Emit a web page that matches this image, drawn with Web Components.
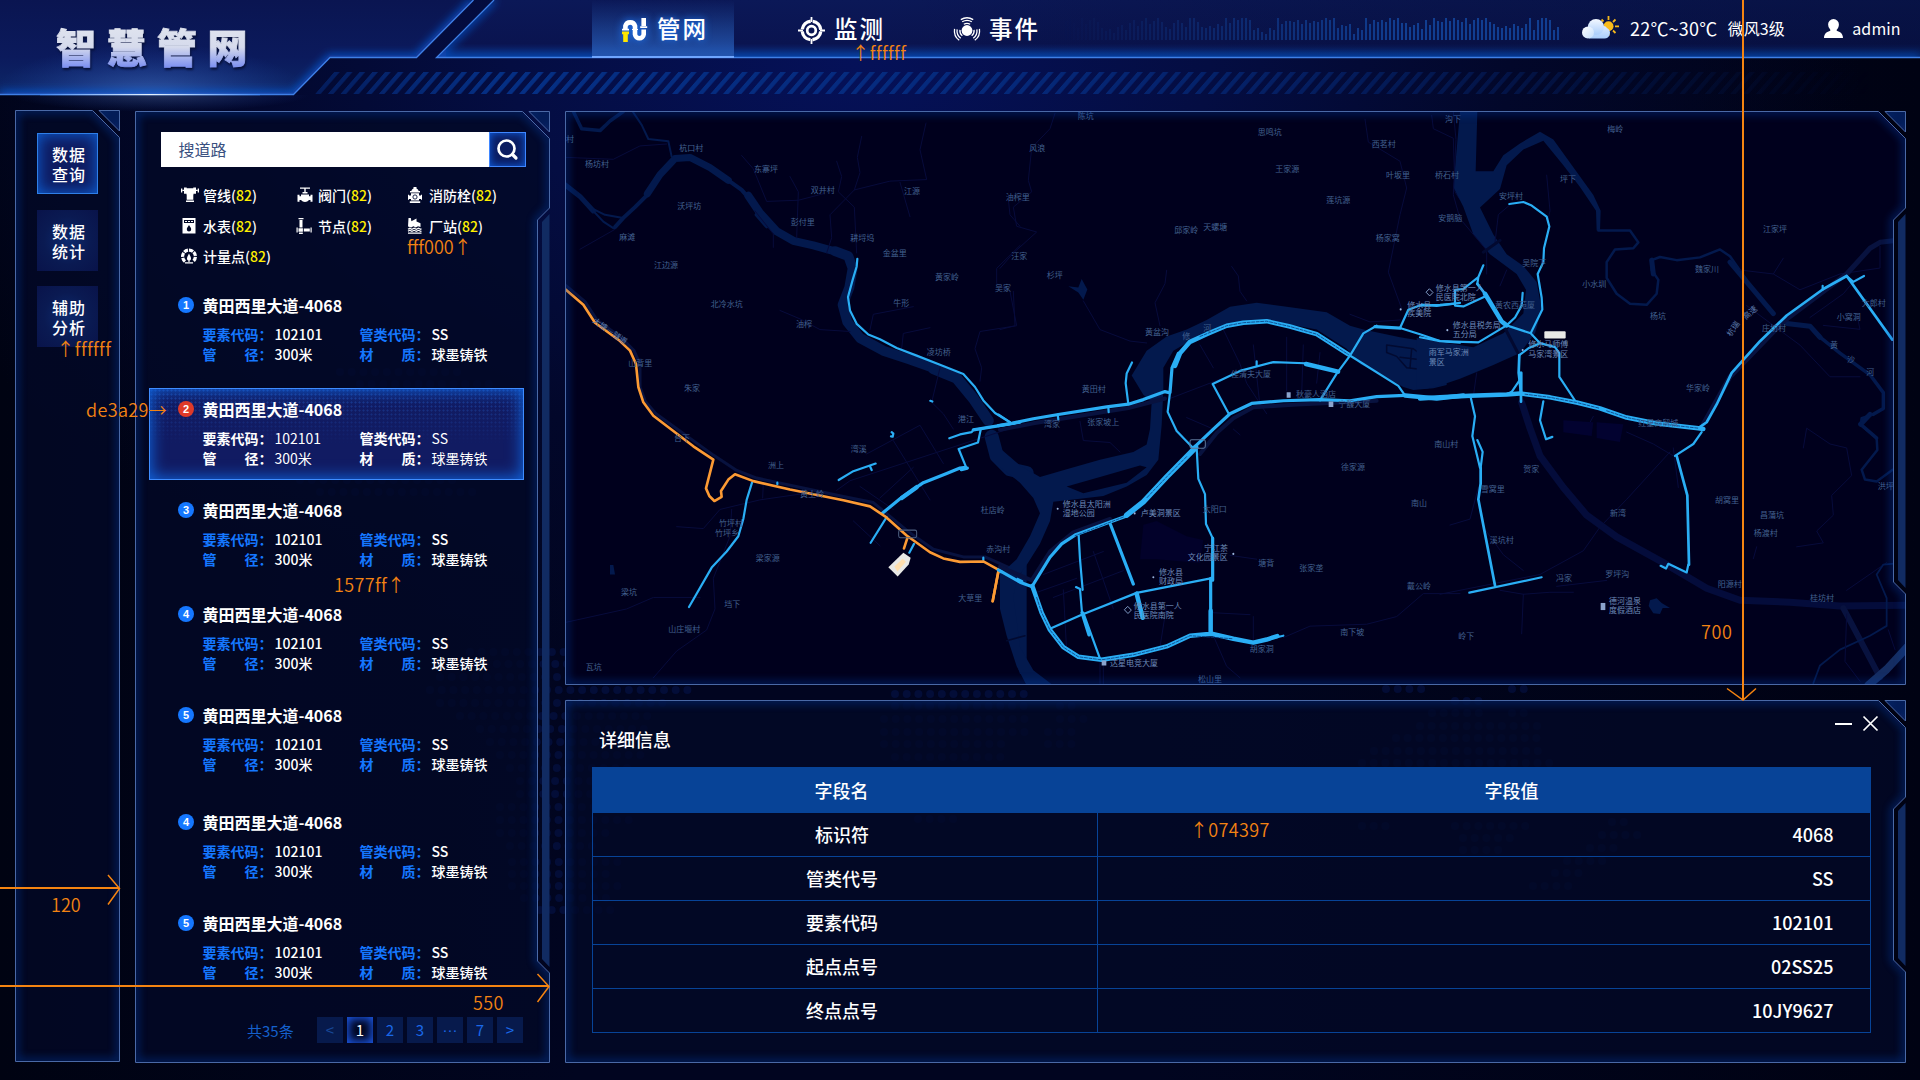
<!DOCTYPE html>
<html lang="zh-CN">
<head>
<meta charset="utf-8">
<title>智慧管网</title>
<style>
html,body{margin:0;padding:0}
body{width:1920px;height:1080px;overflow:hidden;background:#000313;color:#fff;font-family:"Noto Sans CJK SC","Noto Sans",sans-serif}
</style>
</head>
<body>
<pipe-app></pipe-app>
<script>
const css = s => `<style>*{box-sizing:border-box}${s}</style>`;
const define = (name, html, after) => customElements.define(name, class extends HTMLElement {
  connectedCallback() {
    if (this.shadowRoot) return;
    const root = this.attachShadow({ mode: 'open' });
    root.innerHTML = typeof html === 'function' ? html(this) : html;
    if (after) after(this, root);
  }
});

/* ---------- icons ---------- */
const ICONS = {
  net: [25, 24, `<g fill="none" stroke="#fff" stroke-width="4.6"><path d="M3.4 11.5V8a5 5 0 0 1 9.6 0v8.500a4.400 4.400 0 0 0 8.700 0V11.500M21.700 0v8"/></g><path fill="#fff" d="M0 10.800h7v1.800H0zM18.200 8.200h7v1.800h-7zM10 10.900h6v1h-6z"/><path fill="#ffe600" d="M0 13.600h7v2.600H0zM1.200 16.200h4.600V24H1.200z"/>`],
  target: [27, 27, `<g fill="none" stroke="#fff"><circle cx="13.500" cy="13.500" r="9.300" stroke-width="3.300" stroke-dasharray="12.400 2.200" stroke-dashoffset="-1.100"/><circle cx="13.500" cy="13.500" r="4.300" stroke-width="2.700"/><path stroke-width="1.800" d="M13.500 0v5M13.500 22v5M0 13.500h5M22 13.500h5"/></g>`],
  alarm: [26, 25, `<circle cx="13" cy="12.500" r="5.400" fill="#fff"/><g fill="none" stroke="#fff" stroke-width="1.300"><path id="w" d="M9.800 6.200a6.500 6.500 0 0 1 6.400 0M8.200 3.800a9.400 9.400 0 0 1 9.600 0M6.800 1.600a12 12 0 0 1 12.400 0"/><use href="#w" transform="rotate(112 13 12.500)"/><use href="#w" transform="rotate(248 13 12.500)"/></g>`],
  weather: [37, 23, `<defs><linearGradient id="c" x2="0" y2="1"><stop stop-color="#f3f8ff"/><stop offset="1" stop-color="#a9cdfb"/></linearGradient><linearGradient id="d" x2="1" y2="1"><stop stop-color="#fff"/><stop offset="1" stop-color="#c4defc"/></linearGradient></defs><g stroke="#f4b71c" stroke-width="1.800"><path d="M26.500 0v4M33 10.300h4M19.500 3.500l2 2M33.500 3.500l-2.500 2.500M31 14.500l2.500 2.500M26.500 17v3"/></g><circle cx="26.500" cy="10.300" r="5" fill="#f9bb1a"/><path fill="url(#c)" d="M7 22.500h15a5.600 5.600 0 0 0 3-10.500a4 4 0 0 0-3.500-2A8.200 8.200 0 0 0 6 10z"/><circle cx="14" cy="11" r="8" fill="url(#c)"/><circle cx="6" cy="16.500" r="6" fill="url(#d)"/>`],
  user: [19, 19, `<path fill="#fff" d="M9.500 0a5.400 5.400 0 0 1 5.400 5.600c0 2.200-.9 4-2.200 5.100v1.100c3.300.9 6.300 3 6.300 7.200H0c0-4.200 3-6.300 6.300-7.200v-1.100A6.500 6.500 0 0 1 4.100 5.600A5.400 5.400 0 0 1 9.500 0z"/>`],
  search: [21, 21, `<circle cx="9.500" cy="9.500" r="8" fill="none" stroke="#fff" stroke-width="2.700"/><path stroke="#fff" stroke-width="3.200" stroke-linecap="round" d="M15.500 15.500l3.500 3.500"/>`],
  pipe: [18, 16, `<path fill="#fff" d="M0 1.500h1.300v4H0zM16.700 1.500H18v4h-1.300zM1.500 2.800h1.500v1.300H1.500zM15 2.800h1.500v1.300H15zM3 .6h2.700v.7h6.600V.6H15v6.200h-2.500v1H12.300v5H5.700V7.800h-.2v-1H3zM5 13.400h8V15H5z"/>`],
  valve: [18, 16, `<path fill="#fff" d="M4 .5h10v1.300H4zM8.300 1.500h1.400V5H8.300zM6.500 5h5v1.500h-5zM5 7.500h8v1.800h1.500V7.800H16.500v7h-2V13H13c-1 1.300-2.500 2-4 2s-3-.7-4-2H3.500v1.800h-2v-7h2v1.500H5z"/>`],
  hydrant: [16, 16, `<path fill="#fff" d="M6.500 0h3v1.500a3.500 3.500 0 0 1 2.200 2.500H13v1.500H3V4h1.300a3.500 3.500 0 0 1 2.200-2.500zM4 6.300h8v2.200h2V7.800h1v5h-1V12h-2v1.500H4V12H2v.8H1v-5h1v.7h2zM2.800 14.200h10.400V16H2.800z"/><circle cx="8" cy="10" r="2.100" fill="none" stroke="#051038" stroke-width=".9"/>`],
  meter: [16, 16, `<path fill="#fff" fill-rule="evenodd" d="M1.500 0h13v15.500h-13zM3 2v3h10V2zM8 7c-1 1.700-2.200 2.900-2.200 4.200a2.200 2.200 0 0 0 4.400 0C10.200 9.900 9 8.700 8 7z"/><path fill="#fff" d="M4 3h2v1H4zM7 3h2v1H7zM10 3h2v1h-2z"/>`],
  node: [16, 16, `<path fill="#fff" d="M2.500 0h5v1.200h-5zM3.500 2h3v7.500h-3zM7.800 10.500h6v3h-6zM14.500 9.500h1.200v5h-1.200zM.5 9.500h1.200v5H.5zM2.500 10.300h4.400v3.400H2.500zM3 14.600h3.800V16H3z"/>`],
  plant: [16, 16, `<path fill="#fff" d="M1.500 0h2.300l.6 3.200L9.500.6v3l4 1.600V9L11 8.300 8.700 9.500 6.400 8.300 4.200 9.500 1 8.500z"/><path fill="none" stroke="#fff" stroke-width="1.200" d="M1 11.200l1.700-1 2.200 1.100 2.200-1.100 2.200 1.100 2.200-1.100 2.200 1.100.8-.5M1 13.300l1.700-1 2.200 1.100 2.200-1.100 2.200 1.100 2.200-1.100 2.200 1.100.8-.5M1 15.200h13.500"/>`],
  gauge: [16, 16, `<path fill="none" stroke="#fff" stroke-width="3.200" stroke-dasharray="4.200 .9" d="M4 13.500A6.400 6.400 0 1 1 12 13.500"/><path fill="#fff" d="M8 5.500c-.8 2-2 3.400-2 5a2 2 0 0 0 1.400 2V14h1.200v-1.500a2 2 0 0 0 1.400-2c0-1.600-1.200-3-2-5zM4 14.200h8v1.400H4z"/>`],
  close: [15, 15, `<path stroke="#fff" stroke-width="1.700" d="M.5.500l14 14M14.500.500L.500 14.500"/>`],
  min: [17, 15, `<path fill="#fff" d="M0 7h17v2H0z"/>`]
};
define('x-icon', el => {
  const [w, h, body] = ICONS[el.getAttribute('name')];
  return css(':host{display:block;flex:none}svg{display:block;overflow:visible}') + `<svg width="${w}" height="${h}" viewBox="0 0 ${w} ${h}">${body}</svg>`;
});

/* ---------- framed panel ---------- */
define('tech-panel', el => {
  const w = +el.getAttribute('w'), h = +el.getAttribute('h');
  const n = (el.getAttribute('notch') || '').split(',').map(Number);
  const R = w - .5, B = h - .5;
  const notch = n.length > 1 ? `V${n[0]}L${R - 12} ${n[0] + 12}V${n[1] - 12}L${R} ${n[1]}` : '';
  const tab = n.length > 1 ? `<path fill="#112b62" d="M${R} ${n[0] + 6}L${R - 7.500} ${n[0] + 14}V${n[1] - 14}L${R} ${n[1] - 6}z"/>` : '';
  const d = `M.5 .5H${R - 27}L${R} 27.500${notch}V${B}H.5z`, t = `M${R - 20.500} .5H${R}V21z`;
  return css(`:host{display:block;position:relative;width:${w}px;height:${h}px;flex:none}
    svg{position:absolute;inset:0;pointer-events:none}.in{position:relative;height:100%;display:flex;flex-direction:column}
    .under{z-index:0}.over{z-index:1}`) +
  `<svg class="under" width="${w}" height="${h}"><path d="${d}" fill="#030927" fill-opacity=".8"/></svg>
   <div class="in"><slot></slot></div>
   <svg class="over" width="${w}" height="${h}"><defs><clipPath id="a"><path d="${d}"/></clipPath><clipPath id="b"><path d="${t}"/></clipPath>
   <filter id="f" x="-10%" y="-10%" width="120%" height="120%"><feGaussianBlur stdDeviation="4.500"/></filter></defs>
   <g clip-path="url(#a)"><path d="${d}" fill="none" stroke="#0b44b4" stroke-width="6" opacity=".48" filter="url(#f)"/></g>
   <path d="${t}" fill="#05123f"/><g clip-path="url(#b)"><path d="${t}" fill="none" stroke="#0b44b4" stroke-width="4" opacity=".5" filter="url(#f)"/></g>${tab}
   <path d="${d}${t}" fill="none" stroke="#4a69a6"/></svg>`;
});

/* ---------- header ---------- */
define('spectrum-bars', el => {
  const hs = [6,9,5,7,12,8,10,14,9,7,16,11,18,22,15,13,19,22,17,12,22,16,20,22,18,12,9,11,7,13,15,10,17,20,14,19,22,16,19,22,18,13,11,17,20,17,13,22,22,18,13,12,14,12,16,14,22,17,22,20,22,22,20,10,12,8,6,12,10,22,16,19,19,18,20,16,20,17,19,18,20,22,20,22,12,15,14,16,6,12,10,22,16,20,18,20,18,22,20,22,17,17,13,15,17,11,20,15,22,19,18,22,19,22,20,18,22,16,20,22,20,22,18,16,13,12,14,12,16,14,12,16,22,10,20,22,22,20,10,13];
  const n = 125;
  let s = '';
  for (let i = 0; i < n; i++) { const h = hs[(i + hs.length - n) % hs.length]; s += `<rect x="${i * 4}" y="${22 - h}" width="2" height="${h}" fill-opacity="${Math.min(1, i / 85).toFixed(2)}"/>`; }
  return css(':host{display:block}svg{display:block}') + `<svg width="500" height="22" fill="#113e91">${s}</svg>`;
});
define('nav-item', el => css(`:host{display:flex;align-items:center;height:57px;width:142px;padding:3px 0 0 30px;font-size:23.500px;letter-spacing:2px;line-height:30px;font-weight:500}
  :host([active]){background:linear-gradient(180deg,rgba(30,70,160,0) 0%,rgba(40,95,185,.45) 50%,#2354ad 100%);border-bottom:2px solid #6fa6ff;height:58px;text-shadow:0 0 7px #1e7bff}
  :host([active]) x-icon{filter:drop-shadow(0 0 4px #1e7bff)}
  :host([active]) span{left:1px}
  x-icon{margin-right:9px}span{display:block;position:relative;top:-2px}`) +
  `<x-icon name="${el.getAttribute('icon')}"></x-icon><span><slot></slot></span>`);

define('app-header', css(`:host{display:block;position:relative;height:94px}
  .bg{position:absolute;left:0;top:0}
  .row{position:relative;display:flex;height:94px;align-items:flex-start}
  h1{margin:16px 0 0 56px;width:536px;font-size:40px;line-height:60px;letter-spacing:10.500px;font-weight:900;
    background:linear-gradient(180deg,#dfe3ee 20%,#d5daec 52%,#8093f0 84%);-webkit-background-clip:text;background-clip:text;color:transparent;-webkit-text-stroke:.9px transparent;filter:drop-shadow(1px 2px 1px #061038)}
  nav{display:flex}nav nav-item:nth-child(2){margin-left:34px}nav nav-item:nth-child(3){margin-left:14px}
  spectrum-bars{margin:18px 0 0 -5px}
  .w{display:flex;height:57px;align-items:center;margin-left:21px;white-space:nowrap;line-height:24px}
  .w span{position:relative;top:-1px}
  .w x-icon{margin-top:-2px}.t{font-size:18px;margin-left:11px;letter-spacing:.2px}.f{font-size:16px;margin-left:10.500px}.w x-icon.u{margin-left:39.500px;margin-top:0}.a{font-size:16px;margin-left:9px;letter-spacing:.1px}`) +
  `<svg class="bg" width="1920" height="130" viewBox="0 0 1920 130">
   <defs><linearGradient id="l" x2="0" y2="1"><stop stop-color="#0a1551"/><stop offset=".6" stop-color="#0b1a5c"/><stop offset="1" stop-color="#0d2868"/></linearGradient>
   <linearGradient id="r" x2="0" y2="1"><stop stop-color="#0b1857"/><stop offset=".75" stop-color="#0a1450"/><stop offset="1" stop-color="#0b2f80"/></linearGradient>
   <linearGradient id="dk" x2="1" y2="0"><stop offset=".3" stop-color="#00031a" stop-opacity="0"/><stop offset="1" stop-color="#040c30" stop-opacity=".45"/></linearGradient>
   <radialGradient id="g"><stop stop-color="#5b8fe8" stop-opacity=".5"/><stop offset="1" stop-color="#2b5fd0" stop-opacity="0"/></radialGradient>
   <radialGradient id="g2"><stop stop-color="#5b78b0" stop-opacity=".4"/><stop offset="1" stop-color="#2b5fd0" stop-opacity="0"/></radialGradient>
   <linearGradient id="hl" x2="1" y2="0"><stop stop-color="#3f86f4"/><stop offset=".5" stop-color="#e8f4ff"/><stop offset="1" stop-color="#3f86f4"/></linearGradient>
   <linearGradient id="fade" x2="1" y2="0"><stop stop-color="#fff" stop-opacity=".45"/><stop offset=".12" stop-color="#fff" stop-opacity=".9"/><stop offset=".45" stop-color="#fff" stop-opacity=".7"/><stop offset="1" stop-color="#fff" stop-opacity="0"/></linearGradient>
   <mask id="m"><rect x="310" y="60" width="1560" height="40" fill="url(#fade)"/></mask>
   <pattern id="s" width="12.750" height="22" patternUnits="userSpaceOnUse" patternTransform="translate(315 94) skewX(-41)"><rect width="5.600" height="22" fill="#06348c"/></pattern>
   <clipPath id="cl"><path d="M0 94.500H293.500L330 57.500H416.500L473.500 0H0z"/></clipPath>
   <clipPath id="cr"><path d="M494 0L436.500 57.500H1920V0z"/></clipPath>
   <clipPath id="below"><rect y="95" width="600" height="40"/></clipPath>
   <filter id="bl" x="-5%" y="-50%" width="110%" height="200%"><feGaussianBlur stdDeviation="4.500"/></filter></defs>
   <path d="M315 94L334 72H1920V94z" fill="url(#s)" mask="url(#m)"/>
   <g clip-path="url(#cl)"><rect width="480" height="95" fill="url(#l)"/><ellipse cx="150" cy="98" rx="160" ry="55" fill="url(#g)"/>
   <path d="M0 94.500H293.500L330 57.500H416.500L473.500 0" fill="none" stroke="#0f5ad8" stroke-width="6" filter="url(#bl)"/></g>
   <g clip-path="url(#cr)"><rect x="430" width="1490" height="58" fill="url(#r)"/><rect x="430" width="1490" height="58" fill="url(#dk)"/>
   <path d="M494 0L436.500 57.500H1920" fill="none" stroke="#0f55cc" stroke-width="5" filter="url(#bl)"/></g>
   <ellipse cx="160" cy="94" rx="150" ry="18" fill="url(#g2)" clip-path="url(#below)"/>
   <path d="M0 94.500H293.500L330 57.500H416.500L473.500 0M494 0L436.500 57.500H1920" fill="none" stroke="#3f7fe6" stroke-width="1.300"/>
   <rect x="40" y="94" width="220" height="1.200" fill="url(#hl)"/></svg>
   <div class="row"><h1>智慧管网</h1><nav><nav-item active icon="net">管网</nav-item><nav-item icon="target">监测</nav-item><nav-item icon="alarm">事件</nav-item></nav>
   <spectrum-bars></spectrum-bars>
   <div class="w"><x-icon name="weather"></x-icon><span class="t">22℃~30℃</span><span class="f">微风3级</span><x-icon class="u" name="user"></x-icon><span class="a">admin</span></div></div>`);

/* ---------- sidebar ---------- */
define('side-button', css(`:host{display:flex;align-items:center;width:61px;height:61px;margin:0 0 15px 22px;padding:1px 12px 0 15px;font-size:16px;line-height:20px;letter-spacing:1px;font-weight:500;
  background:radial-gradient(circle,#0d2a6e 0%,#0a1a52 55%,#09134a 100%)}
  :host([active]){background:#0e1c62;border:1px solid #2f7fe8;box-shadow:inset 0 0 15px #0d62d8;padding:1px 11px 0 14px;margin-bottom:16px}span{width:36px}`) + `<span><slot></slot></span>`);

/* ---------- search & results ---------- */
define('search-box', css(`:host{display:flex;margin:21px 0 0 26px;width:365px;height:35px}
  .i{flex:1;background:#fff;color:#3a5080;font-size:16px;line-height:34px;padding-left:17.500px}
  .b{width:37px;border:1px solid #3f86ff;background:#0b1c60;box-shadow:inset 0 0 9px #0e5ee0;display:flex;align-items:center;justify-content:center}`) +
  `<div class="i"><slot></slot></div><div class="b"><x-icon name="search"></x-icon></div>`);
define('asset-count', el => css(`:host{display:flex;align-items:center;font-size:14px;line-height:20px;font-weight:500;white-space:nowrap}.i{width:22px;flex:none}b{font-weight:500;color:#fff000}span{position:relative}`) +
  `<div class="i"><x-icon name="${el.getAttribute('icon')}"></x-icon></div><span><slot></slot>(<b>82</b>)</span>`);
define('result-item', el => css(`:host{display:block;position:relative;width:375px;height:92px;padding:10px 0 0 28px;border:1px solid transparent}
  :host([active]){border-color:#3f8cff;background:#111b62}
  :host([active])::before{content:"";position:absolute;inset:0;background:radial-gradient(circle at 1.500px 1.500px,rgba(45,110,225,.4) .8px,transparent 1.300px) 0 0/4px 4px;-webkit-mask-image:linear-gradient(180deg,#000,transparent 62%);mask-image:linear-gradient(180deg,#000,transparent 62%)}
  :host([active])::after{content:"";position:absolute;inset:0;box-shadow:inset 0 0 16px 1px #0f66e0}
  .w{position:relative;z-index:1}.h{display:flex;align-items:center;height:20px;font-size:16px;font-weight:700;line-height:20px}
  i{width:16px;height:16px;border-radius:50%;background:#1577ff;font:700 11px/16px "Liberation Sans",Arial,sans-serif;text-align:center;margin-right:8.500px}
  :host([active]) i{background:#de3a29}
  .g{display:grid;grid-template-columns:72px 85px 72px auto;font-size:14px;line-height:20px;margin:9px 0 0 24.500px;font-weight:500}
  label{color:#1577ff;font-weight:700;display:flex;justify-content:space-between;width:70px;white-space:nowrap}label u{text-decoration:none;display:block;width:28px}
  :host([active]) label{color:#fff}:host([active]) .g span{font-weight:400}`) +
  `<div class="w"><div class="h"><i>${el.getAttribute('no')}</i><slot></slot></div>
  <div class="g"><label>要素代码：</label><span>102101</span><label>管类代码：</label><span>SS</span><label>管<u></u>径：</label><span>300米</span><label>材<u></u>质：</label><span>球墨铸铁</span></div></div>`);
define('page-bar', css(`:host{display:flex;align-items:center;margin:24px 0 0 112px;height:26px;font-size:15px;color:#1a63d6;line-height:25px}
  .n{width:70px;color:#1560cc;position:relative;top:1px}
  a{display:block;width:26px;height:26px;margin-right:4px;background:#071a4c;text-align:center;font-size:15px;color:#1a68e8}
  a.on{background:#020620;box-shadow:inset 0 0 8px 2px #1c58e6;color:#fff}a.d{color:#174796}a.e{font-family:"Liberation Sans",Arial,sans-serif;line-height:26px}`) +
  `<span class="n">共35条</span><a class="d">&lt;</a><a class="on">1</a><a>2</a><a>3</a><a class="e">···</a><a>7</a><a>&gt;</a>`);

/* ---------- map ---------- */
const LBL = {
A:[[18,103,'村'],[75,168,'杨坊村'],[358,127,'杭口村'],[582,182,'东寨坪'],[752,235,'双井村'],[1032,238,'江源'],[1337,255,'油榨里'],[352,278,'沃坪坊'],[692,319,'彭付里'],[178,359,'麻滩'],[871,360,'耕埒坞'],[968,400,'金盆里'],[1354,407,'汪家'],[282,431,'江边源'],[1125,463,'黄家岭'],[1305,493,'吴家'],[452,533,'北冷水坑'],[1000,532,'牛形'],[708,587,'油榨'],[205,688,'山背里'],[1100,659,'凌坊桥'],[372,754,'朱家'],[1194,833,'港江'],[872,913,'湾溪'],[342,884,'台下'],[624,953,'洲上'],[720,1030,'黄土岭'],[477,1106,'竹坪村'],[465,1133,'竹坪乡'],[587,1197,'梁家源'],[183,1287,'梁坑'],[493,1318,'垱下'],[325,1384,'山庄堰村'],[1262,1073,'杜店岭'],[1279,1174,'赤沟村'],[1195,1303,'大草里'],[77,1482,'瓦坑']],
B:[[233,42,'陈坑'],[88,125,'风浪'],[773,85,'思鸣坑'],[826,180,'王家源'],[1115,115,'西茗村'],[1335,50,'沟下'],[1158,196,'叶坂里'],[1305,197,'桥石村'],[979,263,'莲坑源'],[1315,310,'安鹅脑'],[610,333,'天螺塘'],[523,341,'邱家岭'],[1127,360,'杨家窝'],[140,458,'杉坪'],[435,607,'黄盆沟'],[245,756,'黄田村'],[132,846,'湾家'],[262,843,'张家坡上'],[693,717,'佳清夫大厦'],[888,770,'秋豪人酒店'],[1015,795,'宁馥大厦'],[1286,660,'雨军马家洲',1],[1286,685,'景区',1],[1222,535,'修水县',1],[1222,558,'疾美院',1],[1303,900,'南山村'],[1023,960,'徐家源'],[1233,1054,'南山'],[188,1055,'修水县太阳洲',1],[188,1080,'湿地公园',1],[422,1079,'卢美洞景区',1],[608,1068,'太阳口'],[612,1171,'宁江茶',1],[563,1196,'文化园景区',1],[775,1211,'塘背'],[898,1223,'张家垄'],[1221,1270,'戴公岭'],[477,1233,'修水县',1],[477,1257,'财政局',1],[401,1322,'修水县第一人',1],[401,1346,'民医院南院',1],[1021,1391,'南下坡'],[749,1434,'胡家洞'],[330,1471,'达星电竞大厦',1],[594,1514,'松山里'],[547,618,'修'],[610,597,'河'],[1307,492,'修水县第一人',1],[1307,515,'民医院北院',1]],
C:[[502,73,'梅岭'],[360,201,'坪下'],[177,242,'安坪村'],[247,412,'吴院下'],[427,465,'小水圳'],[969,326,'江家坪'],[765,429,'魏家川'],[630,547,'杨坑'],[165,519,'黄农西苑厦'],[38,570,'修水县税务局',1],[38,592,'五分局',1],[265,618,'修水马师傅',1],[265,643,'马家湾景区',1],[1265,514,'大郎村'],[1190,548,'小窝洞'],[966,577,'庄坊村'],[1170,621,'黄'],[1221,656,'沙'],[1279,688,'河'],[738,729,'华家岭'],[595,818,'红星商贸城'],[250,933,'贺家'],[122,983,'雪窝里'],[510,1045,'新湾'],[825,1013,'胡窝里'],[960,1049,'昌蒲坑'],[941,1095,'杨渡村'],[1313,976,'洪坪'],[149,1113,'溪坑村'],[348,1210,'冯家'],[496,1198,'罗坪沟'],[507,1267,'德河温泉',1],[507,1291,'度假酒店',1],[833,1224,'阳源村'],[1110,1260,'桂坊村'],[55,1355,'岭下']]};
const T = { A:[560,.38265], B:[1000,.38265], C:[1440,.3954] };
define('pipe-map', () => {
  let text = '';
  for (const k in LBL) for (const [x, y, s, hi] of LBL[k])
    text += `<text x="${(T[k][0] + x / 3).toFixed(1)}" y="${(100 + y * T[k][1] + 2.800).toFixed(1)}"${hi ? ' fill="#6d8bb8"' : ''}>${s}</text>`;
  const g = (k, body) => `<g transform="translate(${T[k][0]} 100) scale(.33333 ${T[k][1]})">${body}</g>`;
  return css(`:host{display:block;width:1341px;height:574px;clip-path:polygon(0 0,1313px 0,1340px 27px,1340px 97px,1328px 109px,1328px 471px,1340px 483px,1340px 574px,0 574px)}
  svg{display:block;background:#00001d}path{vector-effect:non-scaling-stroke;fill:none;stroke-linejoin:round;stroke-linecap:round}
  .r{stroke:#03194d}.rf{fill:#03194d}.rd{stroke:#070b3c;stroke-width:1}.rr{stroke:#08123f}.p{stroke:#2aaef5;stroke-width:2.200}.w3{stroke-width:3.200}.w4{stroke-width:4.500}.d{stroke:#083a7a;stroke-width:.8;stroke-dasharray:3 1.500}
  .o{stroke:#fc9a34;stroke-width:2.600}.t{fill:#42618f;font-size:8px}`) +
  `<svg width="1341" height="574" viewBox="565 111 1341 574">
  ${g('A', `
   <path class="r" stroke-width="5" d="M10 218L60 252 100 290"/><path class="r" stroke-width="2" d="M100 290L130 318 160 335M100 285L135 300 185 308"/>
   <path class="r" stroke-width="4" d="M165 332L190 308 225 280 262 248"/><path class="r" stroke-width="7" d="M262 245L300 195 345 153 390 150 450 177 505 210"/>
   <path class="r" stroke-width="4" d="M505 210L545 235 575 265M590 300L620 330"/><path class="r" stroke-width="8" d="M565 250L600 295 650 343 700 368 760 380 830 397"/>
   <path class="r" stroke-width="10" d="M825 395L865 408 878 440 868 490 848 535 862 580 900 622 970 655 1050 678 1120 700"/>
   <path class="r" stroke-width="11" d="M1120 702L1190 727 1240 780 1285 838"/><path class="r" stroke-width="14" d="M1295 880L1310 930 1350 965 1400 975"/>
   <path class="r" stroke-width="3.500" d="M40 30L65 75 120 80 150 55 190 30"/><path class="r" stroke-width="2" d="M218 30L245 65 265 102 325 108 335 148"/>
   <path class="rf" d="M1318 1220L1335 1330 1350 1420 1380 1500 1400 1500V1215zM150 1215L160 1215 165 1240 150 1240z"/>
   <path class="rd" d="M18 150L160 155 240 120 320 115M60 390L165 338M545 145L580 180 620 265 715 262 790 245M690 200L715 240 710 360M905 95L892 150 900 190 883 235 810 300 815 360 800 400M883 235L990 212 1100 208 1080 130 1098 60M830 160L845 200 835 240 883 280 890 400M1020 215L1050 305M660 550L720 572 780 600 870 605M930 600L940 560 1060 540M1025 650L1030 610 1110 595M1380 380L1310 440 1310 480 1350 500 1370 590 1260 605 1245 650 1265 700 1260 735M1345 260L1350 300 1380 330M585 290L640 350 640 385"/>
   <path class="rd" d="M830 1020L870 995 1380 850M1140 700L1115 790 1150 820 1180 860M1000 890L1110 1045M920 925L1080 850 1150 950M960 1040L1060 960M880 1100L960 1165M350 1115L430 1120 480 1070 600 1045 720 1030M610 1000L608 1040M18 1365L200 1330 280 1300 420 1300M515 1070L510 1140 460 1250 465 1330 440 1385 350 1440 280 1510M900 1010L1000 1070"/>
   <path class="rr" stroke-width="3" d="M18 485L75 527 110 574 185 622 222 655 240 690 240 750 256 788 288 820 460 928 530 968 590 988 850 1036 940 1052 1045 1128 1120 1174 1210 1194 1275 1194 1380 1235"/>
   <path class="p" d="M892 415L890 435 878 470 864 515 870 550 890 585 925 613 960 625 1010 648 1070 668 1140 692 1210 716 1245 750 1270 785 1305 818 1350 842M1168 884L1200 874 1235 868 1240 862 1380 842M1262 862L1254 895 1196 912 1217 957M980 1090L932 1157M836 993L880 970 947 950M930 957L935 967M1111 786L1117 788M995 868L1000 872 998 880 993 879M576 1000L560 1045 550 1095 535 1140 500 1180 455 1222 387 1325M1062 1160L1048 1183M652 1000V1004M1270 1196V1202"/>
   <path class="p w3" d="M1240 862L1380 842M1217 960L1200 962 1160 976 1090 1000 1020 1042 967 1080M1204 966L1222 962M1316 1230L1385 1258"/><path class="p w4" d="M1070 1012L1025 1040"/>
   <path class="o" d="M10 490L70 535 105 582 180 630 210 655 228 690 235 750 250 790 280 825 340 865 400 905 460 940 438 1015 448 1035 463 1048 485 1037 483 1022 505 992 525 978 580 996 690 1018 850 1046 930 1062 975 1088 1040 1138 1110 1182 1150 1198 1200 1207 1270 1206 1316 1228 1298 1310M1042 1145L1032 1172"/><path class="o" stroke-width="3" d="M1316 1228L1298 1310"/>
   <path style="fill:#e9e9e6" d="M985 1221L1030 1183 1052 1196 1046 1214 1013 1245z"/><path style="fill:#ffdfae" d="M1003 1219L1028 1199 1038 1207 1012 1232z"/>
   <rect x="1016" y="1124" width="54" height="20" rx="5" fill="none" stroke="#4c5f80" stroke-width="3"/>`)}
  ${g('B', `
   <path class="rf" d="M395 720L440 655 500 618 560 600 620 575 690 540 770 530 860 540 980 555 1050 590 1090 600 1200 620 1340 640 1340 745 1300 753 1240 758 1210 750 1080 690 1040 650 950 600 800 575 700 585 600 615 520 655 490 700 490 760 485 850 475 940 440 980 380 1010 310 1035 240 1042 160 1050 150 1100 120 1160 80 1215 50 1250 40 1300 50 1360 60 1430 100 1490 160 1530 80 1530 50 1480 20 1400 0 1330 0 1240 50 1200 90 1140 120 1080 100 1040 60 1000 0 960 0 910 60 955 120 985 200 965 300 940 400 920 440 900 450 860 455 790 430 770z"/>
   <path style="fill:#00001d" d="M200 1010L300 985 420 955 440 960 380 1000 250 1028z"/><path class="rf" d="M205 487L235 490 245 468 262 495 250 522 235 503z"/>
   <path class="rd" style="stroke:#020a30;stroke-width:1.500" d="M1160 640L1240 650 1285 680 1275 705 1220 700 1190 670 1160 660zM1235 650L1230 700M1200 672L1275 680M20 1413L75 1400"/>
   <path class="rd" d="M165 35L150 75 95 125 85 210 95 240 40 280 50 330 110 345 40 400 0 440M500 445L495 480 465 530 480 590M695 435L715 460 720 500 740 525M250 525L300 600 390 630 440 635M1095 50L1105 110 1200 160 1220 230 1200 300 1165 450 1205 545M1295 40L1300 75 1360 100 1365 240 1380 260M0 600L45 590 40 500M240 840L250 890 330 895 360 920M670 600L720 690 740 740 800 820M600 640L640 700M860 620L860 760M910 640L905 770M960 660L950 740M760 640L780 800M510 780L660 730M560 830L640 860M700 860L720 875M1050 560L1110 580 1200 575"/>
   <path class="rd" d="M130 1240L310 1180M160 1300L370 1230M100 1290L230 1250M280 1180L340 1330M200 1440L190 1280M760 1350V1430M640 1340L750 1345M850 1405L930 1375 1100 1370 1190 1350 1270 1290 1380 1290M690 1190L770 1200M500 1320L480 1430M640 1400L680 1480 720 1510M300 1465V1527M310 1465V1527"/>
   <path class="rr" stroke-width="4" d="M0 862L100 845 385 805 495 780M600 925L650 870 700 832 760 803 890 796 1130 786M0 1220L95 1255 150 1180 220 1130 330 1095"/>
   <path style="fill:#02012a" d="M430 1110L470 1100 560 1140 610 1150 600 1210 470 1200 420 1200z"/>
   <path class="p" d="M-5 822L35 845M385 795L377 740 380 715 396 686M173 822L175 835M325 803L326 816M510 765L503 815 530 865 580 910M1045 665L1195 747 1215 772M1130 590L1090 610 1050 668 1010 715 960 785M638 742L720 708 820 685 915 688 1010 710M638 742L685 818M770 683V695M1200 596L1225 548 1265 535 1310 538 1380 530M1200 596L1260 612 1320 630 1380 634M632 1250L410 1288 245 1345 155 1380M236 1137L240 1200 248 1280M228 1273L240 1278 246 1340M250 1340L300 1460M590 910L595 990 615 1030 618 1108 638 1145"/>
   <path class="p w3" d="M-5 851L35 845 100 833 175 822 320 802 385 795 430 783 495 762 508 765M580 910L640 860 690 820 755 793 850 786 960 783 1050 786 1130 775 1215 772M330 1106L400 1265M380 1087L330 1103 225 1137 185 1160 150 1195 97 1270M-5 1228L60 1260 97 1272M638 1145V1255M632 1250V1340M246 1340L267 1398M510 765L516 700 535 662M1125 592L1200 596"/>
   <path class="p w4" d="M1215 772L1310 780 1390 772M525 695L540 662 570 632 620 612 680 590 730 582 800 578 870 592 950 612 1045 665M918 690L1014 710M632 1335V1395M410 1290L428 1353M97 1270L125 1340 150 1385 190 1430 235 1455 305 1463 400 1450 500 1428 570 1400 635 1395 700 1408 760 1418 800 1410 832 1401"/>
   <path class="p" d="M810 1408L850 1400"/><path class="p" style="stroke-width:5.500" d="M587 908L500 985 430 1050 380 1085"/>
   <path class="d" d="M600 618L680 590 730 582 800 578 870 592 950 612 1045 665M560 932L500 985 440 1040M370 1090L225 1139M110 1300L125 1340 150 1385 190 1430 235 1455 305 1463 400 1450 500 1428 570 1400 700 1408"/>
   <rect x="570" y="888" width="46" height="22" rx="5" fill="none" stroke="#5c7699" stroke-width="3"/>
   <path style="stroke:#7f9ac4;stroke-width:1" d="M1289 494L1299 503 1289 512 1279 503zM384 1324L394 1333 384 1342 374 1333z"/>
   <path style="stroke:#9ab4dd;stroke-width:2" d="M1202 547V547.500M1268 675V675.500M173 1068V1068.500M404 1080V1080.500M700 1186V1186.500M460 1247V1247.500"/><path style="fill:#8ba3cc" d="M860 764h12v14h-12zM986 788h14v14h-14zM305 1465h14v13h-14z"/>`)}
  ${g('C', `
   <path class="rf" d="M60 30H112L107 180 160 180 190 140 240 110 300 80 340 100 400 170 460 240 482 280 480 330H470L468 280 420 220 370 165 310 103 250 125 200 165 180 225 120 272 160 340 200 390 250 420 290 460 305 530 285 590 240 640 160 670 60 705 0 722-45 731H-70V602L0 612 100 625 190 590 250 540 258 480 230 440 150 390 100 340 70 270 40 220z"/>
   <path class="r" stroke-width="2.500" d="M475 330L570 330 595 360 580 375 525 378 500 410 500 450 530 490 570 515 620 518 650 490 655 455 635 430 635 405 660 397 710 405 780 398 840 378 870 395 920 455M1300 795L1265 805 1262 822 1310 855 1312 885 1265 935 1275 960 1310 965 1358 935"/>
   <path class="r" stroke-width="5" d="M635 405L640 440M870 410L920 460 1000 540M1040 565L1110 572 1140 600M1262 820L1290 795"/><path class="r" stroke-width="3.500" d="M1140 600L1200 640 1290 695 1330 740 1330 780 1300 795M1262 820L1310 855"/>
   <path class="rf" d="M630 1265L650 1260 665 1272 690 1285 668 1285 660 1300 640 1298 626 1280z"/>
   <path class="rd" d="M40 30L48 100 40 240 60 300 140 380 140 440M165 360L175 290 210 265M320 190L330 280 325 300M200 430L180 470M110 690L100 750M900 430L1000 440 1080 480 1200 440 1320 425 1320 370M1000 440L1030 400M1110 550L1210 490 1250 450M920 520L1080 620 1170 700 1260 700M1150 570L1260 580 1250 540M1090 880L1100 830 1170 870 1220 880 1235 950 1175 1000 1180 1050 1130 1090 1150 1120 1070 1130M700 900L640 870 560 840M690 890L560 1010 480 1080 430 1140 300 1200 0 1250M180 1240L250 1250 330 1245 400 1245M250 1250L245 1350M130 1080L190 1150 250 1190M30 1075L90 1060 115 980M950 1130L940 1160M1220 1240L1340 1170M440 830L460 800M700 880L715 980M500 1215L350 1230"/>
   <path style="fill:#020230" d="M370 810L460 815 455 850 370 840zM470 815L550 820 540 865 470 855z"/>
   <path class="rr" style="stroke:#040c3b" stroke-width="7" d="M245 765L270 830 300 900 370 980 440 1050 530 1105 670 1170 800 1235 900 1265 1050 1270 1200 1280 1395 1278"/>
   <path class="rr" stroke-width="6" d="M1210 1285L1320 1460"/><path class="rr" stroke-width="5" d="M790 820L870 700 1030 560 1220 440 1290 375 1320 360 1360 356"/><path style="stroke:#152d62;stroke-width:8" d="M1285 1480L1340 1440 1400 1385"/>
   <path class="rr" style="stroke:#020930" stroke-width="3" d="M130 385L180 355M175 545L240 650"/>
   <path class="r" stroke-width="1.800" d="M1120 1475L1140 1430 1200 1390 1290 1355 1340 1330 1340 1260 1310 1200 1330 1175 1395 1170"/><path class="rd" d="M1220 1300L1215 1420 1260 1470M1345 1340L1365 1390"/>
   <path class="p" d="M208 263L250 258 275 267 320 295 328 320 312 375 310 410 293 440 305 500 307 530 272 590 300 615 345 625 358 640 358 700 405 760M-60 600L0 610 115 613 200 570 272 590M248 488L245 520 225 550 200 570M112 465L115 448 130 418M115 448L70 478 45 480 45 520 70 522 135 497M-60 520L0 518 45 515M300 615L265 628 238 645M238 710L215 738 200 745M92 752L105 800 97 850 120 930M112 860L128 890 122 930M310 762L300 810 318 858 337 852M745 1175L740 1195 685 1173 678 1185 662 1178M1220 445L1240 460 1272 445M88 1246L305 1207M1148 470V480M705 900L760 870 785 840"/>
   <path class="p w3" style="stroke-width:2.700" d="M710 900L742 1000 747 1175M122 930L122 970 115 1010 165 1228M775 830L800 815 830 770 875 690 960 610 1040 545 1150 478 1220 445L1357 606M238 645L236 690 243 740V763M135 490L112 465"/>
   <path class="p w4" d="M200 570L185 560 135 490M-60 755L0 752 90 748 200 745 240 742 330 752 410 765 480 780 560 803 650 818 775 830 790 832"/><path class="p w3" d="M243 690V740"/>
   <path class="d" d="M255 744L330 752 410 765 480 780M500 786L560 803 650 818 775 830"/>
   <rect x="313" y="585" width="64" height="18" rx="3" fill="#e8e8e6"/><path style="fill:#8ba3cc" d="M482 1272h14v18h-14z"/><path style="stroke:#9ab4dd;stroke-width:2" d="M248 632V632.500M22 582V582.500"/>`)}
  <g class="t">${text}<g fill="#5b79a8"><text transform="translate(592 322) rotate(35)">大塘—隧道</text><text transform="translate(1731 337) rotate(-56)">杭瑞</text><text transform="translate(1746 320) rotate(-42)">高速</text></g></g></svg>`;
});

/* ---------- detail table ---------- */
define('detail-table', () => {
  const rows = [['标识符','4068'],['管类代号','SS'],['要素代码','102101'],['起点点号','02SS25'],['终点点号','10JY9627']];
  return css(`:host{display:block;width:1279px;margin-left:27px;font-size:18px;font-weight:500;line-height:26px}
  .r{display:grid;grid-template-columns:505px 1fr;height:44px;border:1px solid #074397;border-top:0}
  .r>*{display:flex;align-items:center;padding-bottom:1px}.k{justify-content:center;border-right:1px solid #074397;padding-right:6px}.v{justify-content:flex-end;padding-right:36.500px}
  .h{background:#074397;height:46px}.h>*{padding-bottom:0}.h .k{border:0;padding-right:8px}.h .v{justify-content:center;padding:0 0 0 55px}.f>*{padding-bottom:2px}`) +
  `<div class="r h"><div class="k">字段名</div><div class="v">字段值</div></div>` +
  rows.map(([k, v], i) => `<div class="r${i ? '' : ' f'}"><div class="k">${k}</div><div class="v">${v}</div></div>`).join('');
});

/* ---------- design notes drawn over the page ---------- */
define('spec-notes', () => {
  const t = [[851.5,53,'↑ffffff',.35],[56.5,349,'↑ffffff',.35],[407,247,'fff000↑'],[86,410,'de3a29→',.35],[334,585,'1577ff↑',.35],[51,905,'120'],[473,1003,'550',.4],[1701,632,'700',.6],[1190,830,'↑074397',.35]];
  return css(`:host{display:block;position:absolute;inset:0;pointer-events:none;z-index:5}svg{display:block}text{font-size:18px;fill:#f38313;font-weight:350}`) +
  `<svg width="1920" height="1080">${t.map(([x, y, s, l]) => `<text x="${x}" y="${y + 6.500}" letter-spacing="${l || 0}">${s}</text>`).join('')}
  <g fill="none" stroke="#f58411" stroke-width="2"><path d="M1743 0V700M0 888H119M0 986H549"/><path stroke-width="1.500" d="M1727 688.500L1743 700 1756 688.500M108 875L119.500 888.500 108 904.500M537.500 974L549 986.500 537.500 1002"/></g></svg>`;
});

/* ---------- faint dotted world backdrop ---------- */
define('dot-world', () => {
  const runs = [[895,694,12],[895,706,12],[884,719,13],[884,732,13],[884,744,11],[895,757,10],[1060,706,2],[1060,719,3],[1048,732,3],[1048,744,3],[1386,689,4],[1512,689,2],[1455,701,3],[1432,713,5],[1512,713,2],[1420,726,11],[1396,738,13],[1374,751,15],[1362,763,17],[1362,826,3],[1455,826,7],[1463,838,5],[1463,850,4],[1612,822,2],[1602,835,4],[1590,848,3],[1567,861,4],[1555,873,3],[1533,886,4],[918,819,4],[512,862,10],[512,874,9],[512,886,10],[524,898,8],[540,910,7],[470,652,16],[450,664,20],[440,677,22],[430,690,23],[440,703,20],[460,716,17],[480,729,15],[490,742,14],[500,755,13],[510,768,11],[520,781,11],[520,794,10],[500,807,12],[500,820,12],[500,833,10],[510,846,8],[300,480,14],[320,492,14],[360,384,12],[340,372,11]];
  return css(':host{display:block;position:absolute;inset:0}svg{display:block}') + `<svg width="1920" height="1080" fill="#0a1c66" fill-opacity=".34">${runs.map(([x, y, n]) => Array.from({ length: n }, (_, i) => `<ellipse cx="${x + i * 11.700}" cy="${y}" rx="4" ry="4"/>`).join('')).join('')}</svg>`;
});

/* ---------- application ---------- */
define('pipe-app', css(`:host{display:block;position:relative;width:1920px;height:1080px;overflow:hidden;
   background:radial-gradient(ellipse 1000px 620px at 860px 60px,#051159 0%,#040d42 35%,#02072a 65%,rgba(0,3,20,0) 100%),linear-gradient(90deg,#000312,#010520 30%,#010520 60%,#000213)}
  .page{position:relative}main{display:flex;padding:16px 14px 0 15px;align-items:flex-start}
  .side side-button:first-child{margin-top:23px}
  .list{margin:1px 0 0 15px}.right{margin:1px 0 0 15px;display:flex;flex-direction:column;gap:15px}
  .cats{display:grid;grid-template-columns:115px 111px 110px;grid-template-rows:repeat(3,30.500px);margin:13px 0 0 46px}
  .items{display:grid;grid-template-rows:104px 101px 104px 101px 107px 101px 91px;margin:12px 0 0 14px}
  .top{display:flex;justify-content:space-between;height:67px;padding:0 28px 0 34px;font-size:18px;font-weight:500;line-height:26px}
  .top span{margin-top:26px}.top div{display:flex;gap:11px;padding-top:16px}`) +
  `<dot-world></dot-world><div class="page"><app-header></app-header><main>
   <tech-panel class="side" w="105" h="952"><side-button active>数据查询</side-button><side-button>数据统计</side-button><side-button>辅助分析</side-button></tech-panel>
   <tech-panel class="list" w="415" h="952" notch="97,862"><search-box>搜道路</search-box>
    <div class="cats"><asset-count icon="pipe">管线</asset-count><asset-count icon="valve">阀门</asset-count><asset-count icon="hydrant">消防栓</asset-count><asset-count icon="meter">水表</asset-count><asset-count icon="node">节点</asset-count><asset-count icon="plant">厂站</asset-count><asset-count icon="gauge">计量点</asset-count></div>
    <div class="items">${[1,2,3,4,5,4,5].map((n, i) => `<result-item no="${n}"${i === 1 ? ' active' : ''}>黄田西里大道-4068</result-item>`).join('')}</div>
    <page-bar></page-bar></tech-panel>
   <div class="right"><tech-panel w="1341" h="574" notch="97,483"><pipe-map></pipe-map></tech-panel>
   <tech-panel w="1341" h="363" notch="97,272"><div class="top"><span>详细信息</span><div><x-icon name="min"></x-icon><x-icon name="close"></x-icon></div></div><detail-table></detail-table></tech-panel></div>
  </main></div><spec-notes></spec-notes>`);
</script>
</body>
</html>
